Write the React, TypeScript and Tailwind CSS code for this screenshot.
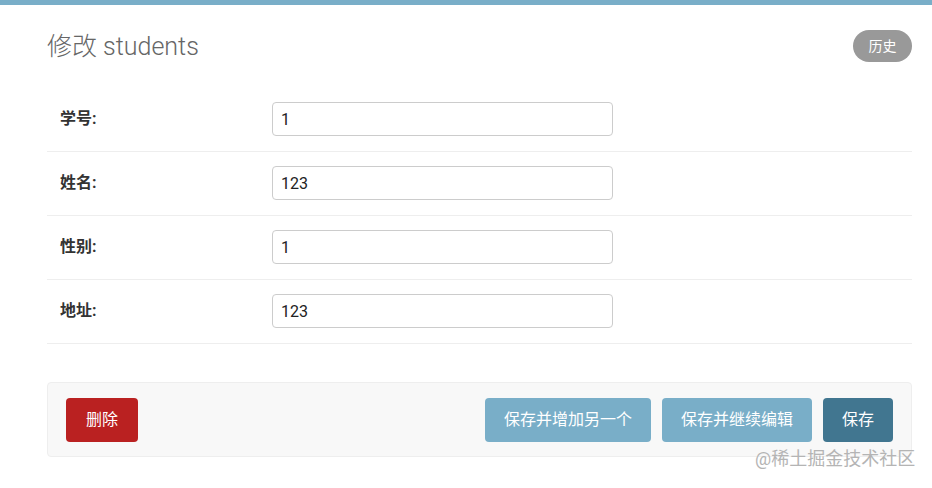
const fields = [
  { label: "学号:", value: "1" },
  { label: "姓名:", value: "123" },
  { label: "性别:", value: "1" },
  { label: "地址:", value: "123" },
];

const cjk = "font-['Roboto','Noto_Sans_CJK_SC',sans-serif]";

export default function App() {
  return (
    <div className={`relative w-[932px] h-[488px] bg-white overflow-hidden ${cjk}`}>
      <div className="h-[5px] bg-[#79aec8]" />

      <div className="pl-[47px] pr-[20px] pt-[25px]">
        <div className="flex items-center justify-between h-[32px]">
          <h1 className="text-[25px] font-light text-[#666] leading-none">修改 students</h1>
          <button className="w-[59px] h-[32px] rounded-full bg-[#999] text-white text-[14px] leading-none">
            历史
          </button>
        </div>

        <div className="mt-[26px]">
          {fields.map((f) => (
            <div key={f.label} className="flex items-start h-[64px] pt-[14px] border-b border-[#eee]">
              <label className="w-[225px] pl-[13px] h-[34px] flex items-center text-[16px] font-bold text-[#333]">
                {f.label}
              </label>
              <input
                readOnly
                value={f.value}
                className="w-[341px] h-[34px] px-[8px] border border-[#ccc] rounded-[4px] text-[16px] text-[#222] font-['Roboto','Liberation_Sans',sans-serif] outline-none"
              />
            </div>
          ))}
        </div>

        <div className="mt-[38px] flex items-center justify-between h-[75px] px-[18px] bg-[#f8f8f8] border border-[#eee] rounded-[4px]">
          <button className="h-[44px] px-[20px] rounded-[4px] bg-[#ba2121] text-white text-[16px]">删除</button>
          <div className="flex gap-[11px]">
            <button className="h-[44px] px-[19px] rounded-[4px] bg-[#79aec8] text-white text-[16px]">保存并增加另一个</button>
            <button className="h-[44px] px-[19px] rounded-[4px] bg-[#79aec8] text-white text-[16px]">保存并继续编辑</button>
            <button className="h-[44px] px-[19px] rounded-[4px] bg-[#417690] text-white text-[16px]">保存</button>
          </div>
        </div>
      </div>

      <div className="absolute left-[755px] top-[450px] text-[18px] text-[#b4b4b4] leading-none">@稀土掘金技术社区</div>
    </div>
  );
}
